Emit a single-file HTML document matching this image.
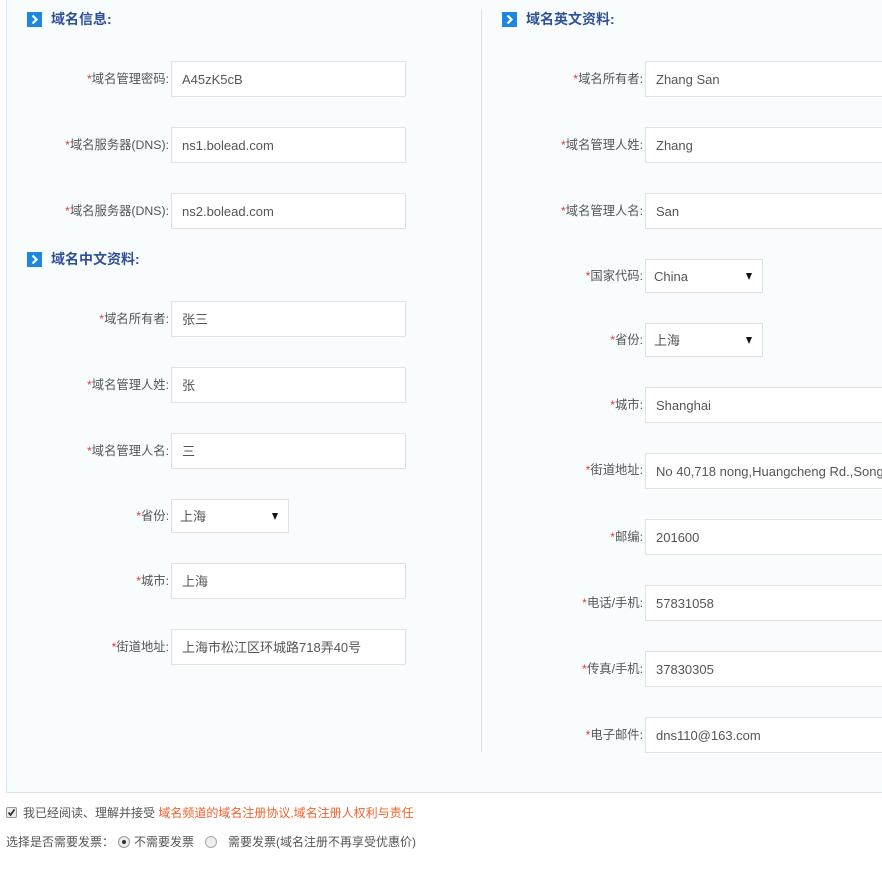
<!DOCTYPE html>
<html><head><meta charset="utf-8"><style>
body{margin:0;width:882px;height:876px;background:#fff;font-family:"Liberation Sans","Noto Sans CJK SC",sans-serif;font-size:12px;color:#555;position:relative;overflow:hidden}
.panel{position:absolute;left:6px;top:-1px;width:890px;height:794px;background:#f8fcfd;border-left:1px solid #d6e6f0;border-bottom:1px solid #d6e6f0;box-sizing:border-box}
.div{position:absolute;left:481px;top:9px;width:1px;height:743px;background:#dbe6ee}
.h{position:absolute;font-size:14px;font-weight:bold;color:#2e4f9a;line-height:16px}
.ic{position:absolute;width:15px;height:15px;background:#1d86e0}
.ic svg{position:absolute;left:0;top:0}
.l{position:absolute;text-align:right;width:200px;line-height:37px;color:#555;font-size:12.3px}
.l b{color:#e3393c;font-weight:normal}
.i{position:absolute;height:36px;background:#fff;border:1px solid #e2e2e2;box-sizing:border-box;line-height:36px;padding-left:10px;font-size:13px;color:#555;white-space:nowrap;overflow:hidden}
.s{width:118px;height:34px;line-height:34px;padding-left:8px}
.s:after{content:"";position:absolute;right:10px;top:13px;border-left:3.5px solid transparent;border-right:3.5px solid transparent;border-top:7px solid #111}
</style></head><body>
<div class="panel"></div><div class="div"></div>
<div class="ic" style="left:27px;top:12px"><svg width="15" height="15"><path d="M5.5 3.5L9.5 7.5L5.5 11.5" stroke="#fff" stroke-width="2.2" fill="none"/></svg></div>
<div class="h" style="left:51px;top:11px">域名信息:</div>
<div class="ic" style="left:27px;top:252px"><svg width="15" height="15"><path d="M5.5 3.5L9.5 7.5L5.5 11.5" stroke="#fff" stroke-width="2.2" fill="none"/></svg></div>
<div class="h" style="left:51px;top:251px">域名中文资料:</div>
<div class="ic" style="left:502px;top:12px"><svg width="15" height="15"><path d="M5.5 3.5L9.5 7.5L5.5 11.5" stroke="#fff" stroke-width="2.2" fill="none"/></svg></div>
<div class="h" style="left:526px;top:11px">域名英文资料:</div>

<div class="l" style="left:-31px;top:61px"><b>*</b>域名管理密码:</div><div class="i" style="left:171px;top:61px;width:235px">A45zK5cB</div>
<div class="l" style="left:-31px;top:127px"><b>*</b>域名服务器(DNS):</div><div class="i" style="left:171px;top:127px;width:235px">ns1.bolead.com</div>
<div class="l" style="left:-31px;top:193px"><b>*</b>域名服务器(DNS):</div><div class="i" style="left:171px;top:193px;width:235px">ns2.bolead.com</div>
<div class="l" style="left:-31px;top:301px"><b>*</b>域名所有者:</div><div class="i" style="left:171px;top:301px;width:235px">张三</div>
<div class="l" style="left:-31px;top:367px"><b>*</b>域名管理人姓:</div><div class="i" style="left:171px;top:367px;width:235px">张</div>
<div class="l" style="left:-31px;top:433px"><b>*</b>域名管理人名:</div><div class="i" style="left:171px;top:433px;width:235px">三</div>
<div class="l" style="left:-31px;top:498px"><b>*</b>省份:</div><div class="i s" style="left:171px;top:499px">上海</div>
<div class="l" style="left:-31px;top:563px"><b>*</b>城市:</div><div class="i" style="left:171px;top:563px;width:235px">上海</div>
<div class="l" style="left:-31px;top:629px"><b>*</b>街道地址:</div><div class="i" style="left:171px;top:629px;width:235px">上海市松江区环城路718弄40号</div>

<div class="l" style="left:443px;top:61px"><b>*</b>域名所有者:</div><div class="i" style="left:645px;top:61px;width:240px">Zhang San</div>
<div class="l" style="left:443px;top:127px"><b>*</b>域名管理人姓:</div><div class="i" style="left:645px;top:127px;width:240px">Zhang</div>
<div class="l" style="left:443px;top:193px"><b>*</b>域名管理人名:</div><div class="i" style="left:645px;top:193px;width:240px">San</div>
<div class="l" style="left:443px;top:258px"><b>*</b>国家代码:</div><div class="i s" style="left:645px;top:259px">China</div>
<div class="l" style="left:443px;top:322px"><b>*</b>省份:</div><div class="i s" style="left:645px;top:323px">上海</div>
<div class="l" style="left:443px;top:387px"><b>*</b>城市:</div><div class="i" style="left:645px;top:387px;width:240px">Shanghai</div>
<div class="l" style="left:443px;top:452px"><b>*</b>街道地址:</div><div class="i" style="left:645px;top:453px;width:240px">No 40,718 nong,Huangcheng Rd.,Songjiang</div>
<div class="l" style="left:443px;top:519px"><b>*</b>邮编:</div><div class="i" style="left:645px;top:519px;width:240px">201600</div>
<div class="l" style="left:443px;top:585px"><b>*</b>电话/手机:</div><div class="i" style="left:645px;top:585px;width:240px">57831058</div>
<div class="l" style="left:443px;top:651px"><b>*</b>传真/手机:</div><div class="i" style="left:645px;top:651px;width:240px">37830305</div>
<div class="l" style="left:443px;top:717px"><b>*</b>电子邮件:</div><div class="i" style="left:645px;top:717px;width:240px">dns110@163.com</div>

<div style="position:absolute;left:6px;top:807px;width:11px;height:11px;border:1px solid #999;border-radius:2px;background:#eee;box-sizing:border-box"><svg width="11" height="11" style="position:absolute;left:-1px;top:-1px"><path d="M2.5 5.5L4.5 8L8.5 2.5" stroke="#333" stroke-width="1.8" fill="none"/></svg></div>
<div style="position:absolute;left:23px;top:805px;line-height:16px">我已经阅读、理解并接受 <span style="color:#f2622d">域名频道的域名注册协议,域名注册人权利与责任</span></div>
<div style="position:absolute;left:6px;top:834px;line-height:16px">选择是否需要发票：</div>
<div style="position:absolute;left:118px;top:836px;width:12px;height:12px;border:1px solid #999;border-radius:50%;box-sizing:border-box;background:#eee"><div style="position:absolute;left:3px;top:3px;width:4px;height:4px;border-radius:50%;background:#333"></div></div>
<div style="position:absolute;left:134px;top:834px;line-height:16px">不需要发票</div>
<div style="position:absolute;left:205px;top:836px;width:12px;height:12px;border:1px solid #aaa;border-radius:50%;box-sizing:border-box;background:#eee"></div>
<div style="position:absolute;left:228px;top:834px;line-height:16px">需要发票(域名注册不再享受优惠价)</div>
</body></html>
